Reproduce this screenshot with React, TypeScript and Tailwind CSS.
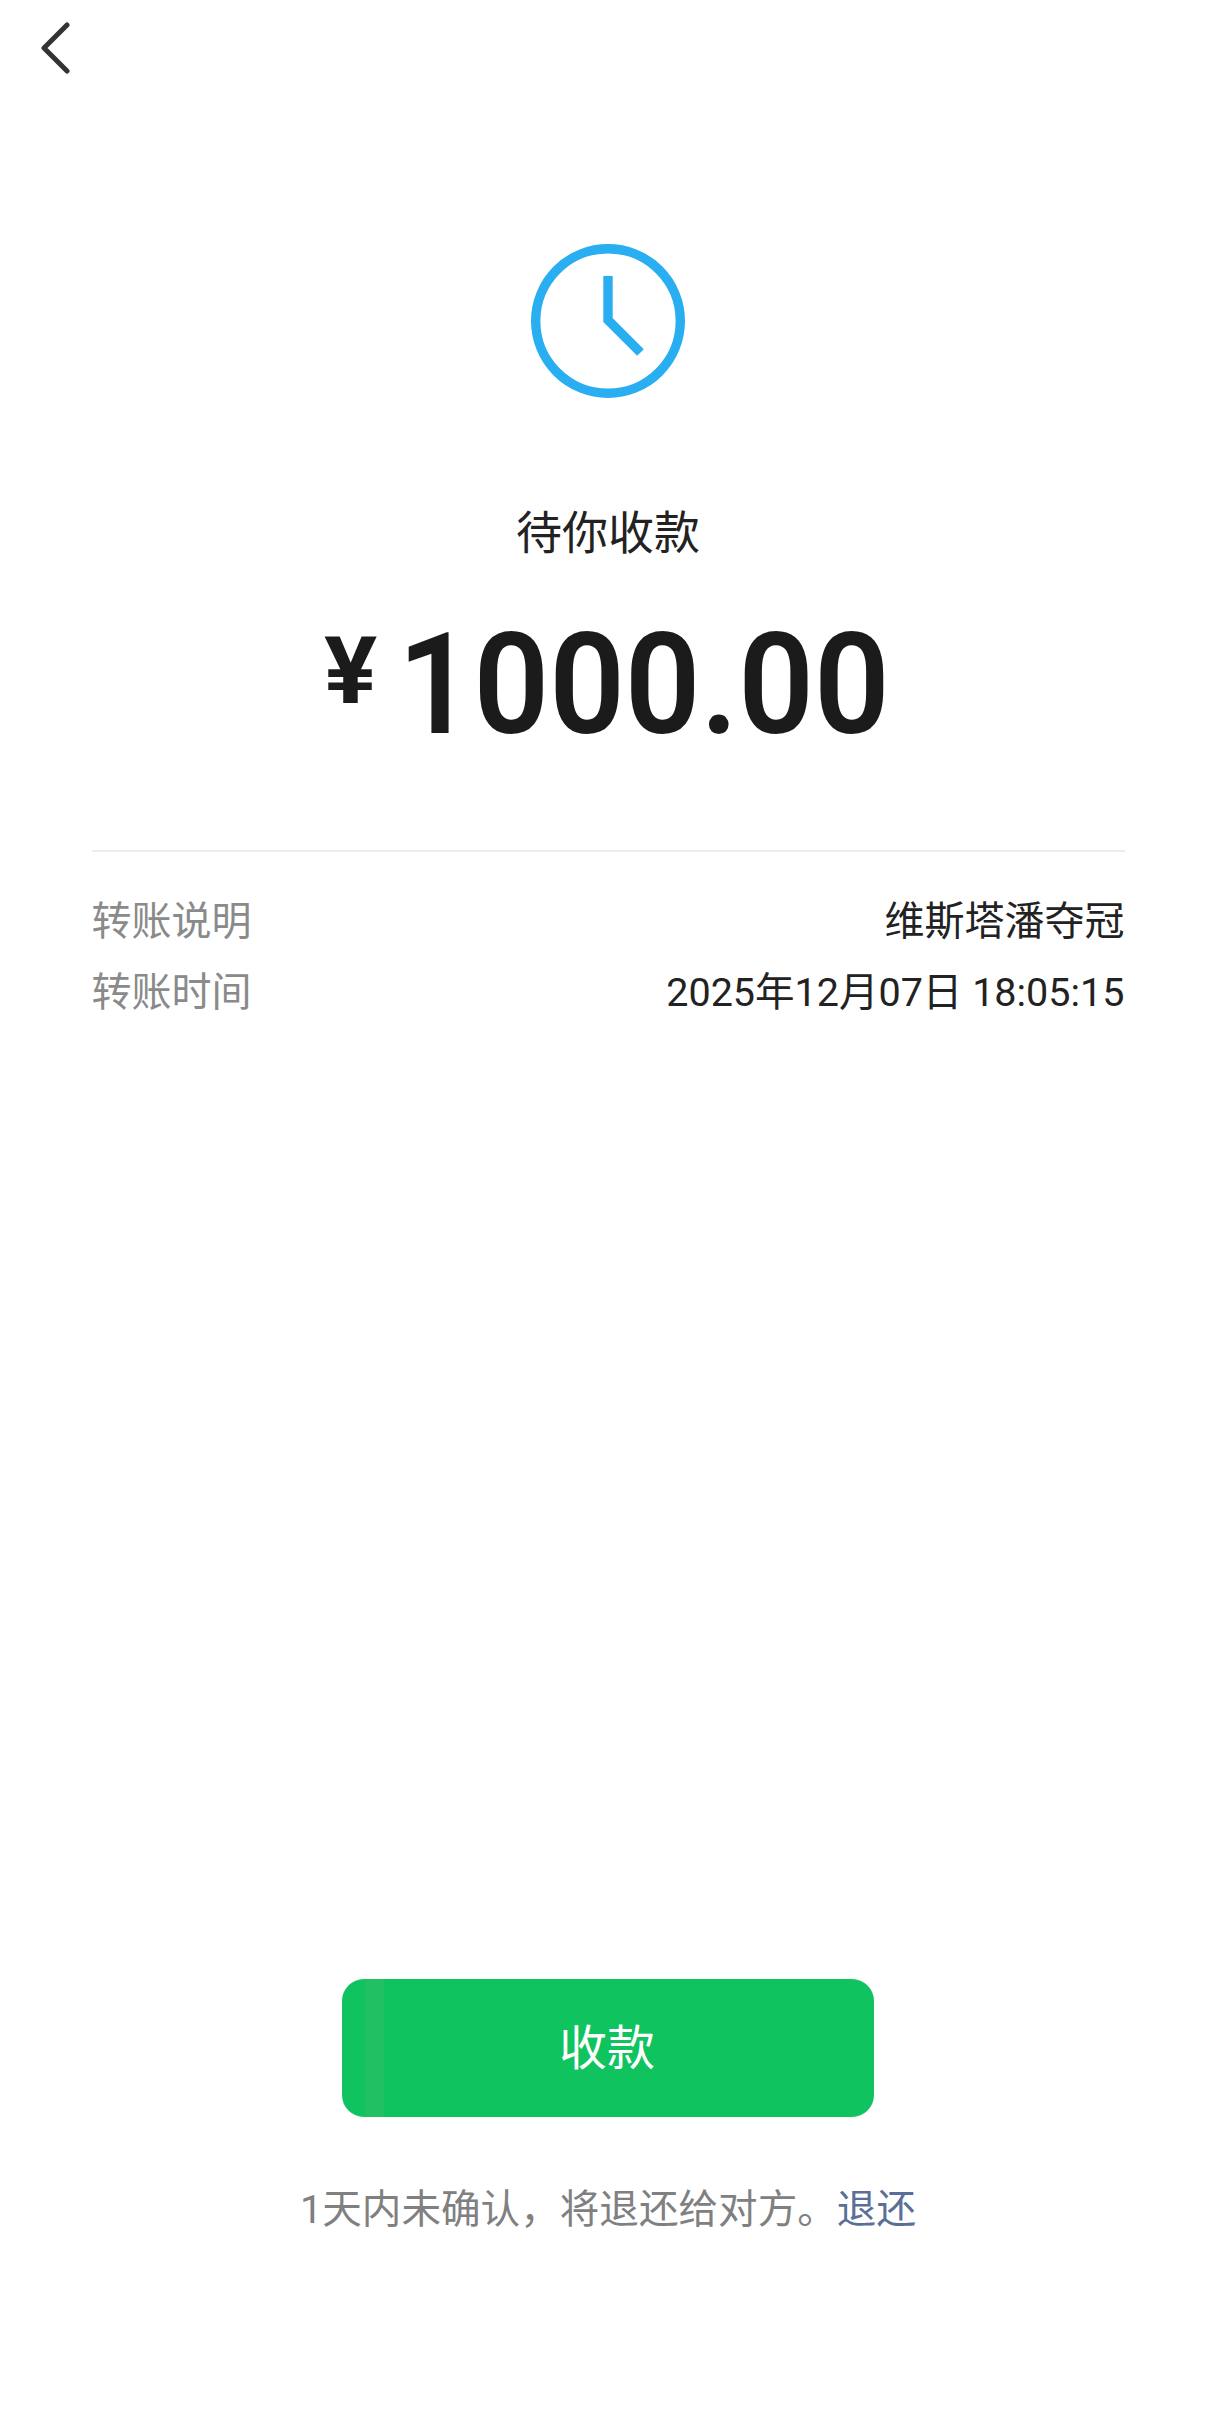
export default function App() {
  return (
    <div className="flex h-[2411px] w-[1216px] flex-col items-center overflow-hidden bg-white font-['Roboto','Noto_Sans_CJK_SC',sans-serif]">
      <div className="flex h-[244px] w-full items-start pl-[40px] pt-[22px]">
        <svg width="32" height="52" viewBox="0 0 32 52" fill="none">
          <path d="M27 3 L4 26 L27 49" stroke="#333333" strokeWidth="5" strokeLinecap="round" strokeLinejoin="round" />
        </svg>
      </div>
      <svg width="154" height="154" viewBox="0 0 154 154" fill="none">
        <circle cx="77" cy="77" r="72.3" stroke="#2aaef2" strokeWidth="9.4" />
        <path d="M77 32 V76 L109.5 108.5" stroke="#2aaef2" strokeWidth="9.4" />
      </svg>
      <div className="mt-[105px] text-[46px] leading-[60px] text-[#222222]">待你收款</div>
      <div className="mt-[46px] flex h-[150px] items-start font-semibold text-[#1b1b1b]">
        <span className="ml-[4px] mt-[17px] scale-x-[1.08] text-[92px] font-bold leading-none">¥</span>
        <span className="ml-[7px] -mr-[11px] origin-center scale-x-[0.94] self-center text-[141px] leading-none">1000.00</span>
      </div>
      <div className="mt-[91px] h-[2px] w-[1033px] bg-[#ececec]" />
      <div className="mt-[34px] flex w-[1033px] justify-between text-[40px] leading-[71px]">
        <span className="text-[#8a8a8a]">转账说明</span>
        <span className="text-[#222222]">维斯塔潘夺冠</span>
      </div>
      <div className="flex w-[1033px] justify-between text-[40px] leading-[71px]">
        <span className="text-[#8a8a8a]">转账时间</span>
        <span className="text-[39.5px] text-[#222222]">2025年12月07日 18:05:15</span>
      </div>
      <div className="relative mt-auto flex h-[138px] w-[532px] items-center justify-center overflow-hidden rounded-[22px] bg-[#0fc35f] text-[48px] text-white">
        <div className="absolute left-[23px] top-0 h-full w-[19px] bg-[#20c063]" />
        <span className="relative top-[1px] -left-[1px]">收款</span>
      </div>
      <div className="mb-[175px] mt-[67px] text-[39.6px] leading-[52px] text-[#808080]">
        1天内未确认，将退还给对方。<span className="text-[#5a6f96]">退还</span>
      </div>
    </div>
  );
}
